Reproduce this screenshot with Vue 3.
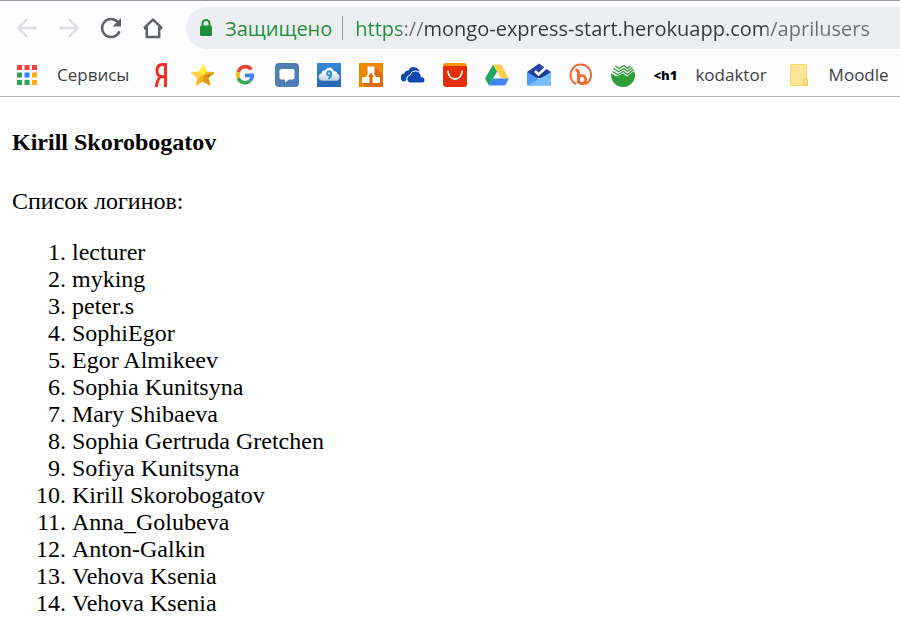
<script setup>
import { ref } from 'vue'

const address = ref('https://mongo-express-start.herokuapp.com/aprilusers')

const users = [
  'lecturer',
  'myking',
  'peter.s',
  'SophiEgor',
  'Egor Almikeev',
  'Sophia Kunitsyna',
  'Mary Shibaeva',
  'Sophia Gertruda Gretchen',
  'Sofiya Kunitsyna',
  'Kirill Skorobogatov',
  'Anna_Golubeva',
  'Anton-Galkin',
  'Vehova Ksenia',
  'Vehova Ksenia',
]
</script>

<template>
  <div class="browser">
    <header class="chrome">
      <div class="toolbar">
        <button class="tool" type="button" aria-label="Назад" disabled>
          <svg viewBox="0 0 24 24"><path d="M21.500 12H3.500M12 3L3 12l9 9" fill="none" stroke="#dcdcdf" stroke-width="2.300" /></svg>
        </button>
        <button class="tool" type="button" aria-label="Вперёд" disabled>
          <svg viewBox="0 0 24 24"><path d="M2.500 12h18M12 3l9 9-9 9" fill="none" stroke="#dcdcdf" stroke-width="2.300" /></svg>
        </button>
        <button class="tool" type="button" aria-label="Обновить">
          <svg viewBox="0 0 24 24">
            <path d="M20.500 15.200A9 9 0 1 1 18.700 6" fill="none" stroke="#5f6368" stroke-width="2.500" />
            <path d="M22 2v8.500h-8.500z" fill="#5f6368" />
          </svg>
        </button>
        <button class="tool" type="button" aria-label="Главная страница">
          <svg viewBox="0 0 24 24"><path d="M3 12.200L12 3.700l9 8.500M5.800 10v11h12.400V10M3 12.200h3M18 12.200h3" fill="none" stroke="#5f6368" stroke-width="2.500" /></svg>
        </button>
        <div class="omnibox">
          <button class="secure" type="button">
            <svg class="lock" viewBox="0 0 14 18">
              <path d="M3.500 8V4.500a3.500 3.500 0 0 1 7 0V8" fill="none" stroke="#1e8e3e" stroke-width="2" />
              <rect x="1" y="6.500" width="12" height="10.500" rx="1.500" fill="#1e8e3e" />
            </svg>
            <span>Защищено</span>
          </button>
          <input v-model="address" class="url" type="text" aria-label="Адрес" spellcheck="false" />
        </div>
      </div>

      <nav class="bookmarks" aria-label="Закладки">
        <a class="mark named" href="#">
          <svg viewBox="0 0 24 24">
            <path fill="#f4433c" d="M2 2h5v5H2zM9.500 2h5v5h-5zM17 2h5v5h-5z" />
            <path fill="#34a35a" d="M2 9.500h5v5H2zM2 17h5v5H2zM9.500 17h5v5h-5z" />
            <path fill="#2a8bf2" d="M9.500 9.500h5v5h-5z" />
            <path fill="#faad0c" d="M17 9.500h5v5h-5zM17 17h5v5h-5z" />
          </svg>
          <span>Сервисы</span>
        </a>
        <a class="mark" href="#" aria-label="Яндекс">
          <svg viewBox="0 0 24 24"><path d="M16.500 24V1.500h-3C9.500 1.500 8 4 8 7.500s1.700 6.300 5.500 6.300h3M11.500 13.500C8.500 16.500 7.800 20 7.200 24" fill="none" stroke="#fa2a18" stroke-width="2.900" /></svg>
        </a>
        <a class="mark" href="#" aria-label="Избранное">
          <svg viewBox="0 0 24 24">
            <path fill="#f9b91c" d="M12.500 1l3 7.500 8.500.8-6.500 5.500 2 8-7.500-4L4.500 23l2-8L0 9.500l8.500-1z" />
            <path fill="#fff02f" d="M12.500 1l3 7.500-3.500 4.500-3.500-4.500z" />
            <path fill="#ffd345" d="M0 9.500l8.500-1L12 13l-5.500 2z" />
            <path fill="#c98408" d="M24 9.300l-12 3.700 5.500 1.800z" />
            <path fill="#e49a12" d="M12 13l5.500 1.800 2 8-7.500-4z" />
          </svg>
        </a>
        <a class="mark" href="#" aria-label="Google">
          <svg viewBox="0 0 24 24" fill="none" stroke-width="3.600">
            <path stroke="#ea4335" d="M18.300 6.500A7.400 7.400 0 0 0 5.300 9.200" />
            <path stroke="#fbbc05" d="M5.300 9.200a7.400 7.400 0 0 0 0 6" />
            <path stroke="#34a853" d="M5.300 15.200a7.400 7.400 0 0 0 11.700 2.600" />
            <path stroke="#4285f4" d="M17 17.800A7.400 7.400 0 0 0 19.400 12.400H12" />
          </svg>
        </a>
        <a class="mark" href="#" aria-label="Сообщения">
          <svg viewBox="0 0 24 24">
            <rect width="24" height="24" rx="4" fill="#507fb5" />
            <path d="M6.500 6h11a2 2 0 0 1 2 2v6.500a2 2 0 0 1-2 2H14l-4 3v-3H6.500a2 2 0 0 1-2-2V8a2 2 0 0 1 2-2z" fill="#fff" />
          </svg>
        </a>
        <a class="mark" href="#" aria-label="Облако 9">
          <svg viewBox="0 0 24 24">
            <defs>
              <linearGradient id="sky" x1="0" y1="0" x2="0" y2="1"><stop offset="0" stop-color="#3688db" /><stop offset="1" stop-color="#2467b2" /></linearGradient>
              <linearGradient id="puff" x1="0" y1="0" x2="0" y2="1"><stop offset="0.300" stop-color="#fff" /><stop offset="1" stop-color="#bbcfe2" /></linearGradient>
            </defs>
            <path fill="url(#sky)" d="M0 0h24v24H0z" />
            <path fill="url(#puff)" stroke="#1f5b9e" stroke-width=".5" d="M5 18a4 4 0 0 1-.5-7.900C4.500 7.500 6.500 6.500 8 7a4.800 4.800 0 0 1 9 1c2-.5 3.500 1 3.500 2.500A3.900 3.900 0 0 1 19.500 18z" />
            <path fill="none" stroke="#2b91ca" stroke-width="2" d="M14 9.500a2 2 0 1 0-.5 2.400c.8-.6.700-1.500.5-2.400.4 3-.3 5-2.500 6.500" />
          </svg>
        </a>
        <a class="mark" href="#" aria-label="Диаграммы">
          <svg viewBox="0 0 24 24">
            <path fill="#f08705" d="M0 0h24v24H0z" />
            <path fill="#df6c0c" d="M15.500 4l8.500 8v12H7l-4-4 7-9z" />
            <path d="M11.500 8L7 16M12.500 8L17 16" fill="none" stroke="#fff" stroke-width="2" />
            <rect x="8.500" y="3.500" width="7" height="6.500" rx="1" fill="#fff" />
            <rect x="3" y="14" width="7.500" height="6" rx="1" fill="#fff" />
            <rect x="13.500" y="14" width="7.500" height="6" rx="1" fill="#fff" />
          </svg>
        </a>
        <a class="mark" href="#" aria-label="OneDrive">
          <svg viewBox="0 0 24 24">
            <path fill="#0a47b1" d="M4 18.500a4 4 0 0 1-.5-8c.2-2 2-3.500 4-3a5.800 5.800 0 0 1 11 1.500 8 8 0 0 0-2.500-.5c-2.500 0-4.500 1.500-5.500 3.500-3 0-5 2-5 4.500z" />
            <path fill="#0a47b1" stroke="#fdfdff" stroke-width="1" d="M9.500 20a4 4 0 0 1-.5-7.900 5.500 5.500 0 0 1 10.500-.6c.5 1 .7 1.500.7 2.200 5 .3 4.800 6.300.8 6.300z" />
          </svg>
        </a>
        <a class="mark" href="#" aria-label="AliExpress">
          <svg viewBox="0 0 24 24">
            <rect width="24" height="12" rx="3" fill="#ff9a0b" />
            <path fill="#e62e04" d="M0 4.500Q0 3 1.500 3h21Q24 3 24 4.500V21a3 3 0 0 1-3 3H3a3 3 0 0 1-3-3z" />
            <path d="M5 8.500c1 10 13 10 14 0" fill="none" stroke="#fff" stroke-width="1.800" stroke-linecap="round" />
          </svg>
        </a>
        <a class="mark" href="#" aria-label="Google Диск">
          <svg viewBox="0 0 24 24">
            <path fill="#22a565" d="M8.200 1.500L0 15.500l4 7 8.200-14z" />
            <path fill="#ffcf48" d="M8.200 1.500h8L24 15.500h-8z" />
            <path fill="#4285f4" d="M8 15.500h16l-4 7H4z" />
          </svg>
        </a>
        <a class="mark" href="#" aria-label="Inbox">
          <svg viewBox="0 0 24 24">
            <path fill="#2946a8" d="M0 9L12 .5 24 9v5H0z" />
            <path fill="#1f398f" d="M4 8h17v7H4z" />
            <path fill="#4e9df4" d="M0 9l12 7 12-7v13.500H0z" />
            <path fill="#77bdfc" d="M24 10v12.500H0z" />
            <path d="M8 8l3.500 3.500L19 4.500" fill="none" stroke="#fff" stroke-width="2.500" />
          </svg>
        </a>
        <a class="mark" href="#" aria-label="Bitly">
          <svg viewBox="0 0 24 24" fill="none" stroke="#f56a2c">
            <path d="M7 21a10.300 10.300 0 1 1 9 .3" stroke-width="2" />
            <path d="M6.500 7c3.500 0 3 1.500 3 5.500v8" stroke-width="2.800" />
            <ellipse cx="13" cy="16.500" rx="3.600" ry="4.200" stroke-width="2.800" />
          </svg>
        </a>
        <a class="mark" href="#" aria-label="Банк">
          <svg viewBox="0 0 24 24">
            <path fill="#2d9f38" d="M0 10l5 3.500 7-3 4 3L23 8q1 2 1 4a12 12 0 0 1-24 0z" />
            <path d="M1.500 8.500l5 3 6-3 4 3 6-5M2.500 5.500l5 3 5.500-3 3.500 3 5-4M4.500 3l3.500 2.500 5-3 3.500 3L19.500 3" fill="none" stroke="#2d9f38" stroke-width="1.300" />
          </svg>
        </a>
        <a class="mark named" href="#">
          <span class="h1-glyph">&lt;h1</span>
          <span>kodaktor</span>
        </a>
        <a class="mark named" href="#">
          <svg viewBox="0 0 24 24">
            <path d="M3.500 1.500h16v15l1 0v6h-17z" fill="#ffe594" stroke="#fbd66b" />
            <path d="M17 22v-5a1.500 1.500 0 0 1 3.500 0V22z" fill="#ffe594" stroke="#f6c746" />
          </svg>
          <span>Moodle</span>
        </a>
      </nav>
    </header>

    <main class="page">
      <h4>Kirill Skorobogatov</h4>
      <p>Список логинов:</p>
      <ol>
        <li v-for="(user, i) in users" :key="i">{{ user }}</li>
      </ol>
    </main>
  </div>
</template>

<style>
body {
  margin: 0;
  background: #fff;
}
</style>

<style scoped>
.browser {
  overflow: hidden;
}

.chrome {
  border-top: 1px solid #9c9c9f;
  border-bottom: 1px solid #b4b4b6;
  background: #fdfdff;
  font-family: "Open Sans", "Noto Sans", sans-serif;
  color: #3c4043;
}

.toolbar {
  display: flex;
  align-items: center;
  gap: 18px;
  padding: 6px 0 0 15px;
}

button {
  border: 0;
  padding: 0;
  background: none;
  font: inherit;
}

svg {
  display: block;
  flex: none;
  width: 24px;
  height: 24px;
}

.tool {
  flex: none;
}

.omnibox {
  display: flex;
  flex: 1;
  align-items: center;
  min-width: 0;
  height: 42px;
  margin-left: 3px;
  padding-left: 13px;
  border-radius: 21px 0 0 21px;
  background: #edeef2;
  font-size: 20px;
}

.secure {
  display: flex;
  align-items: center;
  gap: 12px;
  flex: none;
  height: 24px;
  padding-right: 10px;
  border-right: 1px solid #97999d;
  color: #1e8e3e;
}

.secure .lock {
  width: 14px;
  height: 18px;
}

.url {
  flex: 1;
  min-width: 0;
  height: 32px;
  margin-left: 12px;
  padding: 0;
  border: 0;
  outline: 0;
  font: inherit;
  color: transparent;
  caret-color: #3c4043;
  background: linear-gradient(90deg, #1e8e3e 46px, #6b6e73 46px 69px, #35363a 69px 412px, #6b6e73 412px);
  -webkit-background-clip: text;
  background-clip: text;
}

.bookmarks {
  display: flex;
  align-items: center;
  gap: 18px;
  height: 47px;
  padding: 4px 0 0 15px;
  box-sizing: border-box;
  font-size: 17px;
}

.mark {
  display: flex;
  flex: none;
  align-items: center;
  gap: 18px;
  color: inherit;
  text-decoration: none;
  white-space: nowrap;
}

.named {
  padding-right: 2px;
}

.h1-glyph {
  width: 24px;
  font: 800 13px/24px "Open Sans", sans-serif;
  color: #000;
}

.page {
  padding: 0 12px;
  font: 24px/27px "Liberation Serif", "Times New Roman", serif;
  color: #000;
}

h4 {
  margin: 32px 0;
  font-size: 24px;
}

p {
  margin: 32px 0 24px;
}

ol {
  margin: 24px 0;
  padding-left: 60px;
}
</style>
